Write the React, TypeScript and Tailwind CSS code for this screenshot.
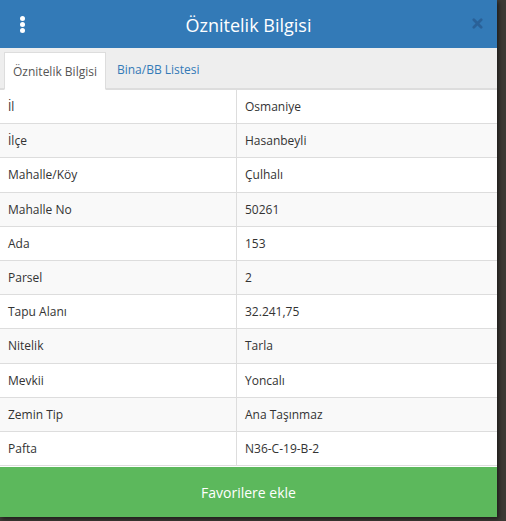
import React from "react";

const rows: [string, string][] = [
  ["İl", "Osmaniye"],
  ["İlçe", "Hasanbeyli"],
  ["Mahalle/Köy", "Çulhalı"],
  ["Mahalle No", "50261"],
  ["Ada", "153"],
  ["Parsel", "2"],
  ["Tapu Alanı", "32.241,75"],
  ["Nitelik", "Tarla"],
  ["Mevkii", "Yoncalı"],
  ["Zemin Tip", "Ana Taşınmaz"],
  ["Pafta", "N36-C-19-B-2"],
];

export default function App() {
  return (
    <div
      className="w-[506px] h-[521px] overflow-hidden bg-[#3d3a35] flex"
      style={{ fontFamily: '"Open Sans", "Noto Sans", sans-serif' }}
    >
      <div className="w-[497px] h-[517px] flex flex-col bg-white shadow-[2px_2px_4px_rgba(0,0,0,0.5)]">
        <div className="h-[48px] bg-[#337ab7] flex items-center relative shrink-0">
          <div className="absolute left-[20px] top-[16px] flex flex-col gap-[1px]">
            <div className="w-[5px] h-[5px] rounded-full bg-white" />
            <div className="w-[5px] h-[5px] rounded-full bg-white" />
            <div className="w-[5px] h-[5px] rounded-full bg-white" />
          </div>
          <div className="flex-1 text-center text-white text-[18px] font-medium leading-none pt-[1px]">
            Öznitelik Bilgisi
          </div>
          <div className="absolute left-[472px] top-[18px]">
            <svg width="11" height="11" viewBox="0 0 12 12">
              <path d="M2 2 L10 10 M10 2 L2 10" stroke="#2a6198" strokeWidth="3" strokeLinecap="round" />
            </svg>
          </div>
        </div>
        <div className="h-[42px] bg-[#eeeeee] border-b-2 border-[#dddddd] flex items-end px-[4px] shrink-0">
          <div className="h-[38px] -mb-[2px] bg-white border border-[#dddddd] border-b-white px-[8px] pt-[1px] flex items-center text-[12px] text-[#555555]">
            Öznitelik Bilgisi
          </div>
          <div className="h-[38px] px-[11px] pt-[1px] flex items-center text-[12px] text-[#337ab7]">
            Bina/BB Listesi
          </div>
        </div>
        <div className="flex-1 flex flex-col">
          {rows.map(([k, v], i) => (
            <div
              key={k}
              className={`flex h-[34.2px] border-b border-[#dddddd] text-[12px] text-[#333333] ${
                i % 2 === 1 ? "bg-[#f9f9f9]" : "bg-white"
              }`}
            >
              <div className="w-[237px] border-r border-[#dddddd] px-[8px] pt-[1px] flex items-center">{k}</div>
              <div className="flex-1 px-[8px] pt-[1px] flex items-center">{v}</div>
            </div>
          ))}
        </div>
        <div className="h-[50px] bg-[#5cb85c] flex items-center justify-center text-white text-[14px] font-medium shrink-0">
          Favorilere ekle
        </div>
      </div>
    </div>
  );
}
